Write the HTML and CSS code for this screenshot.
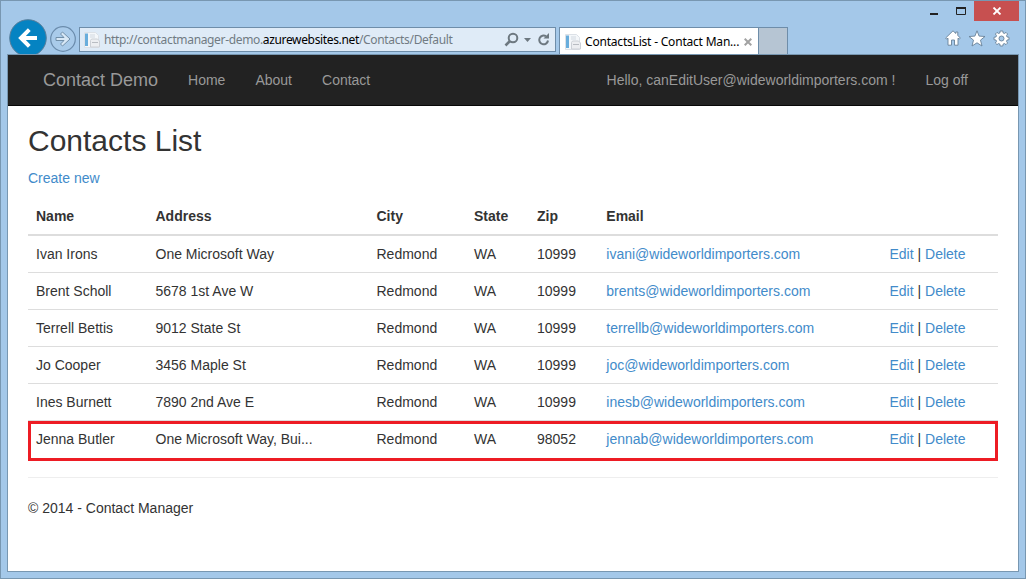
FILE: index.html
```html
<!DOCTYPE html>
<html lang="en">
<head>
<meta charset="utf-8">
<title>ContactsList - Contact Manager</title>
<link rel="stylesheet" href="styles.css">
</head>
<body>
<div class="window">
  <header class="chrome">
    <div class="navigation">
      <svg class="back" width="38" height="35" viewBox="0 0 38 35"><circle cx="19" cy="19" r="18.3" fill="#0583c2" stroke="#587e9b"/><path d="M28 19H12M20.3 10.7L12 19l8.300 8.300" fill="none" stroke="#fff" stroke-width="4"/></svg>
      <svg class="forward" width="28" height="28" viewBox="0 0 28 28"><circle cx="14" cy="14" r="12.300" fill="#a9cbea" stroke="#6b8cac" stroke-width="1.200"/><path d="M7 12.500h8l-3.500-3.500 2-2 7.500 7-7.500 7-2-2 3.500-3.500H7z" fill="#d8e8f6" stroke="#718fa9"/></svg>
      <div class="address">
        <svg class="page-icon" width="16" height="16" viewBox="0 0 16 16"><path d="M.5.500h11l3 3v12H.5z" fill="#f4f7fa" stroke="#dce1e7"/><path d="M1 1.500h3V14H1z" fill="#68addc"/><path d="M6 3h5M6 5h5" stroke="#d2d9e1"/><path d="M6.500 8.500l1-1.500h6l2 2v6h-9z" fill="#eceef1" stroke="#ccd0d6"/><path d="M8 10.500h6" stroke="#b8bcc2"/></svg>
        <span class="url">http://contactmanager-demo.<b>azurewebsites.net</b>/Contacts/Default</span>
        <svg class="address-tools" width="47" height="16" viewBox="0 0 47 16"><circle cx="9" cy="6" r="4.300" fill="none" stroke="#6d7880" stroke-width="2"/><path d="M6 9L1.500 13.500" stroke="#6d7880" stroke-width="2.600"/><path d="M20 6h7l-3.500 4z" fill="#6d7880"/><path d="M42 4.200A4.400 4.400 0 1 0 44 8.500" fill="none" stroke="#6d7880" stroke-width="2"/><path d="M39.500 6.500H45V1z" fill="#6d7880"/></svg>
      </div>
      <div class="tab">
        <svg class="page-icon" width="16" height="16" viewBox="0 0 16 16"><path d="M.5.500h11l3 3v12H.5z" fill="#f4f7fa" stroke="#dce1e7"/><path d="M1 1.500h3V14H1z" fill="#68addc"/><path d="M6 3h5M6 5h5" stroke="#d2d9e1"/><path d="M6.500 8.500l1-1.500h6l2 2v6h-9z" fill="#eceef1" stroke="#ccd0d6"/><path d="M8 10.500h6" stroke="#b8bcc2"/></svg>
        <span class="tab-title">ContactsList - Contact Man...</span>
        <svg class="tab-close" width="8" height="8" viewBox="0 0 8 8"><path d="M.7.700l6.600 6.600M7.300.700L.7 7.300" stroke="#a2a2a2" stroke-width="2"/></svg>
      </div>
      <div class="new-tab"></div>
    </div>
    <div class="controls">
      <div class="window-buttons">
        <svg width="48" height="20" viewBox="0 0 48 20"><path d="M4 13h8" stroke="#222" stroke-width="2"/><path d="M30.500 7v6.500h9V7z" fill="none" stroke="#222"/><path d="M30 7h10" stroke="#222" stroke-width="2"/></svg>
        <div class="close"><svg width="10" height="8" viewBox="0 0 10 8"><path d="M1.500.500l7 7M8.500.500l-7 7" stroke="#fff" stroke-width="1.800"/></svg></div>
      </div>
      <div class="tools">
        <svg width="16" height="16" viewBox="0 0 16 16"><path d="M.7 8L8 .8l2.800 2.700V2h2v3.400L15.300 8l-1 1.200-1.300-1v7H9.500V10h-3v5.200H3v-7l-1.300 1z" fill="#fff" stroke="#688198" stroke-width=".9"/></svg>
        <svg width="18" height="17" viewBox="0 0 18 17"><path d="M9 .8l2.100 5.300 5.900.4-4.500 3.600 1.500 5.900L9 12.800 4 16l1.500-5.900L1 6.500l5.900-.4z" fill="#fff" stroke="#688198" stroke-width=".9"/></svg>
        <svg width="17" height="17" viewBox="0 0 17 17"><path d="M7.200 1h2.600l.4 2 1.200.5L13 2.400 14.600 4l-1.100 1.700.5 1.200 2 .4v2.400l-2 .4-.5 1.200 1.100 1.700L13 14.600l-1.600-1.100-1.200.5-.4 2H7.200l-.4-2-1.200-.5L4 14.600 2.400 13l1.100-1.700-.5-1.200-2-.4V7.300l2-.4.500-1.200L2.400 4 4 2.400l1.600 1.100L6.800 3z" fill="#fff" stroke="#688198" stroke-width=".9"/><circle cx="8.500" cy="8.500" r="2.500" fill="#a4c8e9" stroke="#688198" stroke-width=".9"/></svg>
      </div>
    </div>
  </header>
  <div class="viewport">
    <nav class="navbar">
      <a class="brand">Contact Demo</a><a class="home">Home</a><a class="about">About</a><a>Contact</a>
      <div class="account"><a>Hello, canEditUser@wideworldimporters.com !</a><a>Log off</a></div>
    </nav>
    <main class="content">
      <h2>Contacts List</h2>
      <p><a class="link">Create new</a></p>
      <table class="contacts">
        <colgroup><col class="name"><col class="street"><col class="city"><col class="state"><col class="zip"><col class="email"><col class="actions"></colgroup>
        <thead><tr><th>Name</th><th>Address</th><th>City</th><th>State</th><th>Zip</th><th>Email</th><th></th></tr></thead>
        <tbody>
          <tr><td>Ivan Irons</td><td>One Microsoft Way</td><td>Redmond</td><td>WA</td><td>10999</td><td><a class="link">ivani@wideworldimporters.com</a></td><td><a class="link">Edit</a> | <a class="link">Delete</a></td></tr>
          <tr><td>Brent Scholl</td><td>5678 1st Ave W</td><td>Redmond</td><td>WA</td><td>10999</td><td><a class="link">brents@wideworldimporters.com</a></td><td><a class="link">Edit</a> | <a class="link">Delete</a></td></tr>
          <tr><td>Terrell Bettis</td><td>9012 State St</td><td>Redmond</td><td>WA</td><td>10999</td><td><a class="link">terrellb@wideworldimporters.com</a></td><td><a class="link">Edit</a> | <a class="link">Delete</a></td></tr>
          <tr><td>Jo Cooper</td><td>3456 Maple St</td><td>Redmond</td><td>WA</td><td>10999</td><td><a class="link">joc@wideworldimporters.com</a></td><td><a class="link">Edit</a> | <a class="link">Delete</a></td></tr>
          <tr><td>Ines Burnett</td><td>7890 2nd Ave E</td><td>Redmond</td><td>WA</td><td>10999</td><td><a class="link">inesb@wideworldimporters.com</a></td><td><a class="link">Edit</a> | <a class="link">Delete</a></td></tr>
          <tr class="highlighted"><td>Jenna Butler</td><td>One Microsoft Way, Bui...</td><td>Redmond</td><td>WA</td><td>98052</td><td><a class="link">jennab@wideworldimporters.com</a></td><td><a class="link">Edit</a> | <a class="link">Delete</a></td></tr>
        </tbody>
      </table>
      <footer>© 2014 - Contact Manager</footer>
    </main>
  </div>
</div>
</body>
</html>
```
FILE: styles.css
```css
* { box-sizing: border-box; }
body { margin: 0; font: 14px/20px "Liberation Sans", Arial, sans-serif; color: #333; overflow: hidden; }
svg { display: block; flex: none; }
.window { width: 1026px; height: 579px; border: 1px solid #7897b1; background: #a4c8e9; padding: 0 6px 6px; display: flex; flex-direction: column; }
.chrome { height: 53px; display: flex; justify-content: space-between; }
.navigation { display: flex; align-items: flex-start; }
.back { margin: 18px 0 0 2px; }
.forward { margin: 24px 2px 0 2px; }
.address { width: 477px; height: 25px; margin-top: 26px; border: 1px solid #6e8da9; background: #dfebf7; display: flex; align-items: center; padding-left: 4px; font: 12px/18px "Noto Sans", "Open Sans", sans-serif; color: #717b83; }
.url { margin-left: 4px; width: 352px; white-space: nowrap; letter-spacing: -.345px; }
.url b { font-weight: 400; color: #000; }
.address-tools { margin-left: 48px; }
.tab { margin: 26px 0 0 3px; width: 200px; height: 27px; background: #fff; border: 1px solid #6e8da9; border-bottom: 0; display: flex; align-items: center; padding: 1px 0 0 5px; font: 12px/18px "Noto Sans", "Open Sans", sans-serif; color: #000; }
.tab-title { margin-left: 4px; width: 156px; white-space: nowrap; letter-spacing: -.2px; }
.tab-close { margin-left: 3px; }
.new-tab { margin-top: 26px; width: 29px; height: 27px; border: 1px solid #6e8da9; border-width: 1px 1px 0 0; background: #b6c5d3; }
.controls { display: flex; flex-direction: column; align-items: flex-end; }
.window-buttons { display: flex; }
.close { width: 45px; height: 20px; background: #c75050; display: flex; align-items: center; justify-content: center; }
.tools { display: flex; gap: 7px; margin: 9px 9px 0 0; }
.viewport { flex: 1; background: #fff; border: 1px solid #7897b1; }
.navbar { height: 51px; background: #222; border-bottom: 1px solid #080808; color: #999; display: flex; align-items: center; padding-left: 35px; }
.brand { font-size: 18px; margin-right: 30px; }
.home, .about { margin-right: 30px; }
.account { margin-left: auto; padding-right: 50px; display: flex; gap: 30px; }
.content { padding: 18px 20px 0; }
h2 { margin: 0 0 11px; font-size: 30px; line-height: 33px; font-weight: 400; }
p { margin: 0 0 10px; }
.link { color: #428bca; }
.contacts { width: 970px; table-layout: fixed; border-spacing: 0; text-align: left; }
.name { width: 119.500px; }
.street { width: 221px; }
.city { width: 97.500px; }
.state { width: 63px; }
.zip { width: 69.300px; }
.email { width: 283.200px; }
.actions { width: 116.500px; }
.contacts th { padding: 8px; height: 38px; border-bottom: 2px solid #ddd; }
.contacts td { padding: 8px; border-top: 1px solid #ddd; white-space: nowrap; }
.contacts tbody tr:first-child td { border-top: 0; }
.highlighted { position: relative; }
.highlighted::after { content: ""; position: absolute; inset: 1px 0 -4px; border: 3px solid #ed1c24; }
footer { margin-top: 20px; border-top: 1px solid #eee; padding-top: 20px; }
```
